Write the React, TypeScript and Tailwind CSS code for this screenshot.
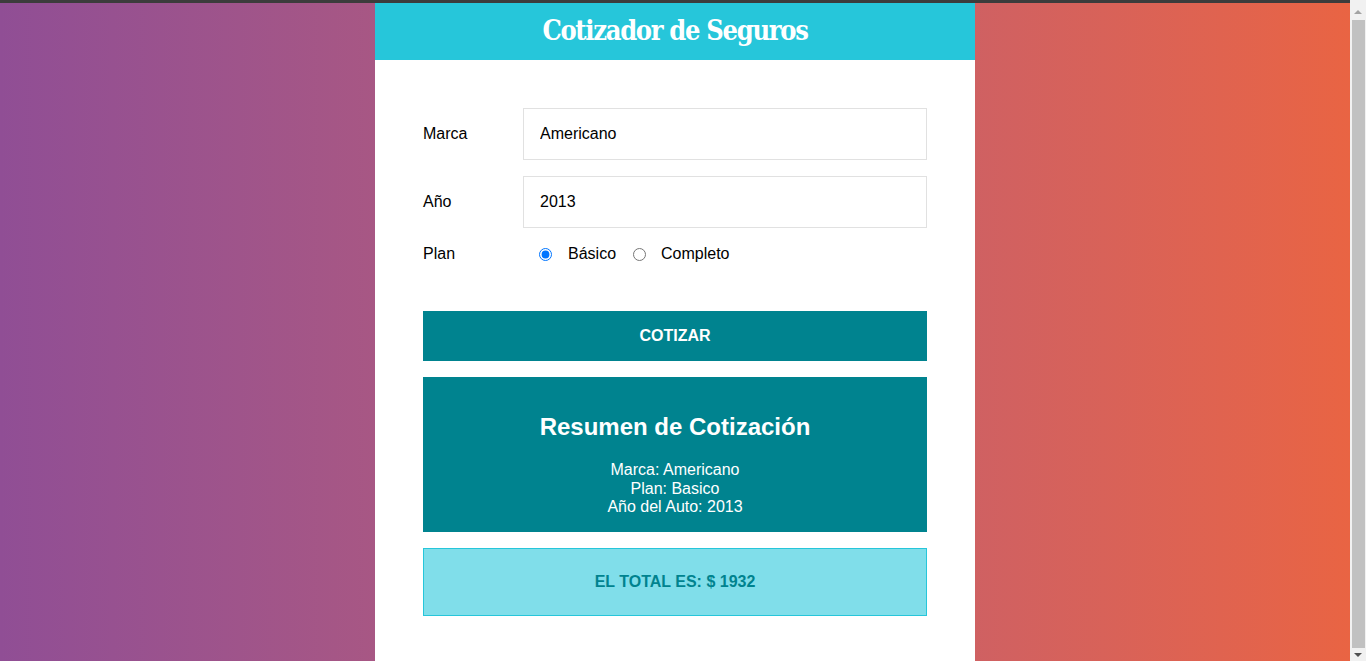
import { useState } from "react";

export default function App() {
  const [marca, setMarca] = useState("Americano");
  const [year, setYear] = useState("2013");
  const [plan, setPlan] = useState("basico");

  return (
    <div className="flex min-h-screen font-['Liberation_Sans',Arial,sans-serif] text-black">
      <main className="flex-1 bg-gradient-to-r from-[#904e95] to-[#e96443]">
        <div className="h-[3px] bg-[#3c3c3c]"></div>
        <div className="mx-auto w-[600px] bg-white">
          {/* Header */}
          <header className="flex h-[57px] items-center justify-center bg-[#26c6da]">
            <h1 className="font-['DejaVu_Serif',serif] text-[27px] font-bold tracking-[-1.3px] text-white font-stretch-condensed">
              Cotizador de Seguros
            </h1>
          </header>

          {/* Form */}
          <div className="px-[48px] pt-[48px] pb-[48px]">
            <div className="flex items-center">
              <label className="w-[100px] text-base">Marca</label>
              <input
                className="h-[52px] flex-1 border border-[#e1e1e1] px-[16px] text-base outline-none"
                value={marca}
                onChange={(e) => setMarca(e.target.value)}
              />
            </div>

            <div className="mt-[16px] flex items-center">
              <label className="w-[100px] text-base">Año</label>
              <input
                className="h-[52px] flex-1 border border-[#e1e1e1] px-[16px] text-base outline-none"
                value={year}
                onChange={(e) => setYear(e.target.value)}
              />
            </div>

            <div className="mt-[16px] flex h-[20px] items-center">
              <label className="w-[100px] text-base">Plan</label>
              <div className="flex items-center pl-[16px]">
                <input
                  type="radio"
                  name="plan"
                  className="m-0 h-[13px] w-[13px]"
                  checked={plan === "basico"}
                  onChange={() => setPlan("basico")}
                />
                <span className="ml-[16px] text-base">Básico</span>
                <input
                  type="radio"
                  name="plan"
                  className="m-0 ml-[17px] h-[13px] w-[13px]"
                  checked={plan === "completo"}
                  onChange={() => setPlan("completo")}
                />
                <span className="ml-[15px] text-base">Completo</span>
              </div>
            </div>

            <button className="mt-[47px] flex h-[50px] w-full items-center justify-center bg-[#00838f] text-base font-bold uppercase text-white">
              Cotizar
            </button>

            {/* Resumen */}
            <div className="mt-[16px] bg-[#00838f] pt-[36px] pb-[15px] text-center text-white">
              <h2 className="text-[24px] font-bold leading-[28px]">Resumen de Cotización</h2>
              <div className="mt-[20px] text-base leading-[18.5px]">
                <p>Marca: {marca}</p>
                <p>Plan: Basico</p>
                <p>Año del Auto: {year}</p>
              </div>
            </div>

            {/* Total */}
            <div className="mt-[16px] flex h-[68px] items-center justify-center border border-[#26c6da] bg-[#80deea]">
              <p className="text-base font-bold text-[#00838f]">EL TOTAL ES: $ 1932</p>
            </div>
          </div>
        </div>
      </main>

      {/* scrollbar gutter */}
      <aside className="flex w-[16px] flex-col items-center bg-[#f1f1f1] pt-[3px]">
        <div className="flex h-[17px] items-center justify-center">
          <div className="h-0 w-0 border-x-[4px] border-b-[4px] border-x-transparent border-b-[#a3a3a3]"></div>
        </div>
        <div className="h-[628px] w-[13px] bg-[#c1c1c1]"></div>
        <div className="flex h-[13px] items-center justify-center">
          <div className="h-0 w-0 border-x-[4px] border-t-[4px] border-x-transparent border-t-[#505050]"></div>
        </div>
      </aside>
    </div>
  );
}
